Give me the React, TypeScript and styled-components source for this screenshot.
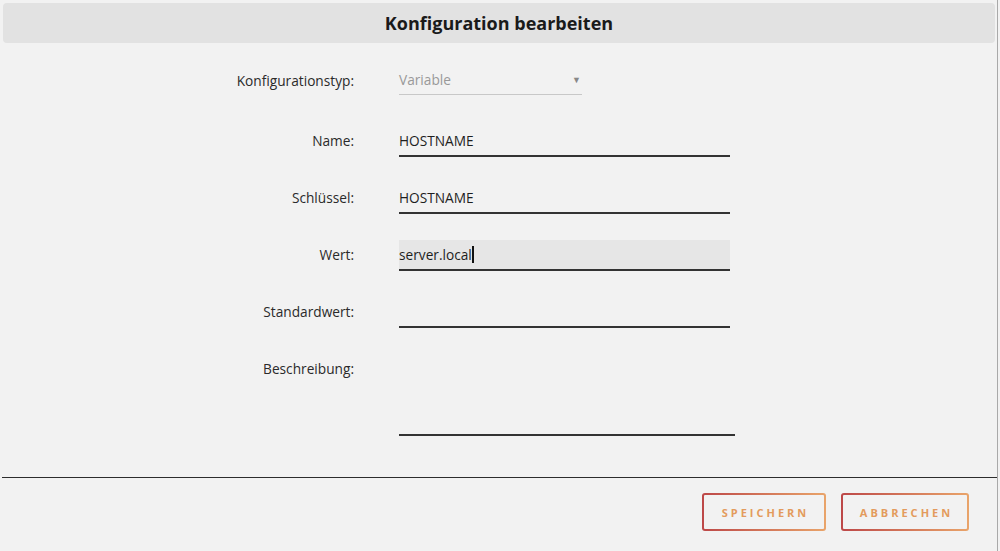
import React from 'react'
import styled, { createGlobalStyle } from 'styled-components'

const GlobalStyle = createGlobalStyle`
    html, body {
        margin: 0;
        padding: 0;
        background: #f2f2f2;
        font-family: "Open Sans", "Liberation Sans", sans-serif;
        color: #222;
    }
`

const Dialog = styled.div`
    width: 998px;
    height: 551px;
    box-sizing: border-box;
    border-right: 1px solid #a9a9a9;
    display: flex;
    flex-direction: column;
    overflow: hidden;
`

const Header = styled.div`
    margin: 3px 2px 0 3px;
    height: 40px;
    border-radius: 4px;
    background: #e2e2e2;
    display: flex;
    align-items: center;
    justify-content: center;
    font-size: 18px;
    font-weight: 700;
    color: #1a1a1a;
`

const Form = styled.div`
    display: grid;
    grid-template-columns: 354px 1fr;
    column-gap: 45px;
    row-gap: 26px;
    padding-top: 21px;
`

const Label = styled.div<{ $top?: boolean }>`
    text-align: right;
    font-size: 13.7px;
    color: #2a2a2a;
    display: flex;
    justify-content: flex-end;
    align-items: ${p => (p.$top ? 'flex-start' : 'center')};
    padding-top: ${p => (p.$top ? '5px' : '0')};
    padding-bottom: ${p => (p.$top ? '0' : '3px')};
`

const Select = styled.div`
    width: 183px;
    height: 31px;
    box-sizing: border-box;
    border-bottom: 1px solid #c8c8c8;
    display: flex;
    align-items: center;
    justify-content: space-between;
    font-size: 13.7px;
    color: #999;
    margin-bottom: 5px;
`

const Arrow = styled.span`
    font-size: 9px;
    color: #888;
    margin-right: 1px;
`

const Field = styled.div<{ $width?: number; $height?: number; $filled?: boolean }>`
    width: ${p => p.$width ?? 331}px;
    height: ${p => p.$height ?? 31}px;
    box-sizing: border-box;
    border-bottom: 2px solid #333;
    background: ${p => (p.$filled ? '#e6e6e6' : 'transparent')};
    display: flex;
    align-items: center;
    font-size: 13.7px;
    color: #1e1e1e;
`

const Caret = styled.span`
    display: inline-block;
    width: 2px;
    height: 17px;
    background: #111;
`

const Divider = styled.div`
    margin: 41px 0 0 2px;
    border-top: 1.5px solid #2d2d2d;
`

const Footer = styled.div`
    display: flex;
    justify-content: flex-end;
    gap: 15px;
    padding: 15px 28px 0 0;
`

const Button = styled.button<{ $width: number }>`
    width: ${p => p.$width}px;
    height: 38px;
    border: 2px solid transparent;
    border-radius: 3px;
    background: linear-gradient(#f2f2f2, #f2f2f2) padding-box,
        linear-gradient(to right, #bd4848, #e9a46a) border-box;
    color: #e39b5d;
    font-family: "Open Sans", "Liberation Sans", sans-serif;
    font-size: 11px;
    font-weight: 700;
    letter-spacing: 3px;
    padding: 0 0 0 3px;
    cursor: pointer;
`

function App() {
    return (
        <Dialog>
            <GlobalStyle />
            <Header>Konfiguration bearbeiten</Header>
            <Form>
                <Label>Konfigurationstyp:</Label>
                <div>
                    <Select>
                        <span>Variable</span>
                        <Arrow>▼</Arrow>
                    </Select>
                </div>

                <Label>Name:</Label>
                <Field>HOSTNAME</Field>

                <Label>Schlüssel:</Label>
                <Field>HOSTNAME</Field>

                <Label>Wert:</Label>
                <Field $filled>
                    server.local<Caret />
                </Field>

                <Label>Standardwert:</Label>
                <Field />

                <Label $top>Beschreibung:</Label>
                <Field $width={336} $height={82} />
            </Form>
            <Divider />
            <Footer>
                <Button $width={124}>SPEICHERN</Button>
                <Button $width={128}>ABBRECHEN</Button>
            </Footer>
        </Dialog>
    )
}

export default App
